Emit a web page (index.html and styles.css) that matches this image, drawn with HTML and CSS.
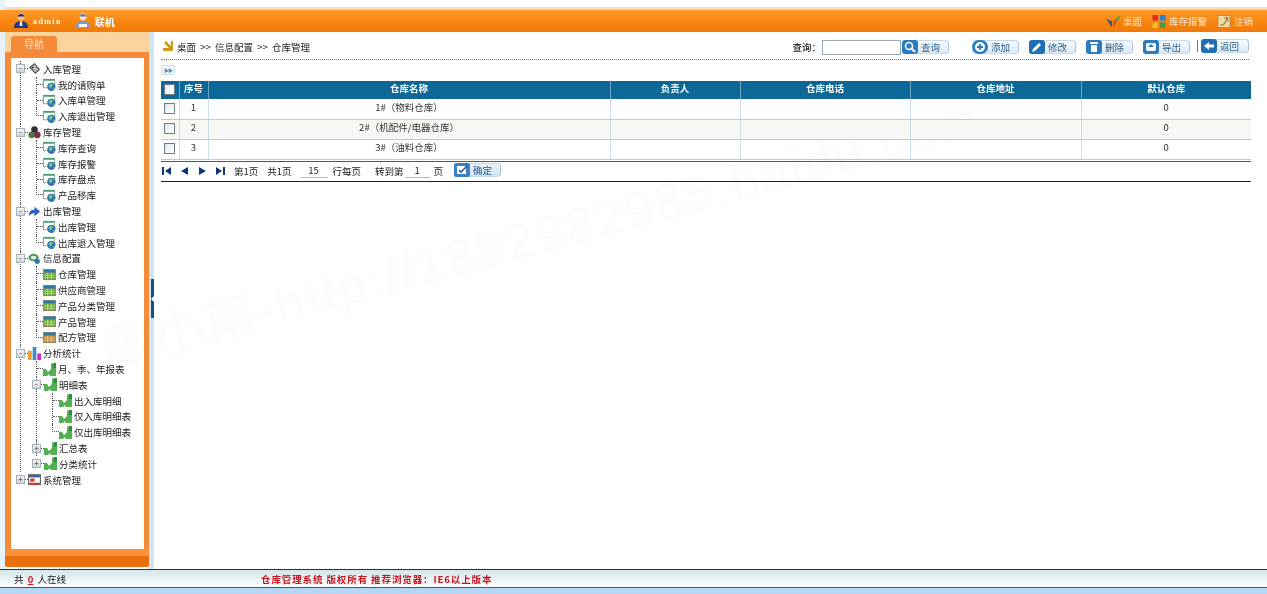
FILE: index.html
```html
<!DOCTYPE html>
<html lang="zh-CN">
<head>
    <meta charset="UTF-8">
    <title>仓库管理系统</title>
    <link rel="stylesheet" href="styles.css">
</head>
<body>
<svg class="defs" width="0" height="0">
    <symbol id="i-page" viewBox="0 0 14 14"><rect x="0.5" y="1.5" width="12" height="9" fill="#fff" stroke="#7fae94"/><rect x="0.5" y="1" width="12" height="2" fill="#4fa070"/><circle cx="9" cy="9.500" r="4.500" fill="#2b78b8"/><path d="M6 8l2.500-2 2 1-1 3-2 1zM10.500 11.500l2.500-1.500-1 2.500z" fill="#8cc46a"/></symbol>
    <symbol id="i-table" viewBox="0 0 14 12"><rect width="14" height="12" fill="#8c8a6a"/><rect x="1" y="1" width="12" height="3" fill="#2a78b0"/><rect x="1" y="4" width="12" height="7" fill="#6fae3c"/><path d="M1 6.5h12M1 9h12M5 4v7M9 4v7" stroke="#d6e6a8" stroke-width=".7"/></symbol>
    <symbol id="i-tablered" viewBox="0 0 14 12"><rect width="14" height="12" fill="#8c8a6a"/><rect x="1" y="1" width="12" height="3" fill="#2a78b0"/><rect x="1" y="4" width="12" height="7" fill="#c98a3c"/><path d="M1 6.5h12M1 9h12M5 4v7M9 4v7" stroke="#e8d8a8" stroke-width=".7"/></symbol>
    <symbol id="i-chart" viewBox="0 0 13 13"><path d="M0 6h3l2 3 3-3V1l2-1h3v13H0z" fill="#52b052"/><path d="M10 0h3v5h-3z" fill="#2f8f3a"/><path d="M4 13l1.500-2 2 2z" fill="#d5f0d5"/></symbol>
    <symbol id="i-tag" viewBox="0 0 14 14"><path d="M1 6l6-5 6 7-5 5z" fill="#55585c"/><path d="M3 6l4-3 4 5-3 3z" fill="#b9bdc0"/><circle cx="5" cy="6" r="1" fill="#222"/></symbol>
    <symbol id="i-balls" viewBox="0 0 14 14"><circle cx="7" cy="4" r="3.6" fill="#2b2f3a"/><circle cx="4" cy="9.5" r="3.6" fill="#4d7a3a"/><circle cx="10" cy="9.5" r="3.6" fill="#7a2f4a"/></symbol>
    <symbol id="i-arrow" viewBox="0 0 14 14"><path d="M1 12C1 7 3 5 7 5V2l6 5-6 5V9c-3 0-4 1-6 3z" fill="#2a62c0"/></symbol>
    <symbol id="i-people" viewBox="0 0 14 14"><ellipse cx="6" cy="6" rx="5.5" ry="4" fill="#4e9a58"/><ellipse cx="6" cy="6" rx="3" ry="2" fill="#dff0e0"/><circle cx="10" cy="10" r="2.8" fill="#2b78b8"/></symbol>
    <symbol id="i-bars" viewBox="0 0 14 14"><rect x="0" y="4" width="4" height="10" fill="#f0a030"/><rect x="5" y="0" width="4" height="14" fill="#3a8ed0"/><rect x="10" y="7" width="4" height="7" fill="#e020c0"/></symbol>
    <symbol id="i-sys" viewBox="0 0 12 12"><rect x=".5" y="1.5" width="11" height="9" fill="#fff" stroke="#666"/><rect x="1" y="2" width="10" height="2" fill="#2a5a9a"/><rect x="2" y="5" width="4" height="3" fill="#d04030"/><rect x="1" y="9" width="10" height="2" fill="#c83a30"/></symbol>
    <symbol id="i-man" viewBox="0 0 14 16"><circle cx="7" cy="4" r="3.4" fill="#f0c090"/><path d="M3.5 3.5C4 0 10 0 10.500 3.500z" fill="#1c2f70"/><path d="M0 15c0-5 3-7 7-7s7 2 7 7z" fill="#1f3a8a"/><path d="M6 8h2l.5 5H5.500z" fill="#ffe0a0"/></symbol>
    <symbol id="i-online" viewBox="0 0 14 16"><circle cx="7" cy="4" r="3.4" fill="#ffe0c0"/><path d="M3.500 3.500C4 0 10 0 10.500 3.500z" fill="#4a7ac8"/><path d="M0 15c0-5 3-7 7-7s7 2 7 7z" fill="#6aa0e8"/><rect x="3" y="11" width="8" height="3" fill="#fff"/></symbol>
    <symbol id="i-desk" viewBox="0 0 14 12"><path d="M0 3l6 3v6z" fill="#2a5aa0"/><path d="M14 1L7 6v6z" fill="#d05020"/><path d="M8 4l6-4-1 4z" fill="#50a040"/></symbol>
    <symbol id="i-alert" viewBox="0 0 14 14"><rect width="6" height="6" fill="#e03020"/><rect x="8" width="6" height="6" fill="#2a80d0"/><rect y="8" width="6" height="6" fill="#f0c020"/><rect x="8" y="8" width="6" height="6" fill="#40a040"/></symbol>
    <symbol id="i-exit" viewBox="0 0 14 14"><rect x=".5" y=".5" width="13" height="13" fill="#f0d8a0" stroke="#a89060"/><path d="M3 11c5 0 6-4 7-8M7 3h4v4" fill="none" stroke="#9a7a30" stroke-width="1.200"/></symbol>
    <symbol id="i-search" viewBox="0 0 16 14"><rect width="16" height="14" rx="3" fill="#2a7cc0"/><circle cx="7" cy="6" r="3.500" fill="none" stroke="#fff" stroke-width="1.600"/><path d="M9.500 8.500l3.500 3.500" stroke="#fff" stroke-width="2"/></symbol>
    <symbol id="i-add" viewBox="0 0 16 14"><rect width="16" height="14" rx="7" fill="#2a7cc0"/><circle cx="8" cy="7" r="5" fill="#fff"/><path d="M8 4v6M5 7h6" stroke="#2a7cc0" stroke-width="1.800"/></symbol>
    <symbol id="i-edit" viewBox="0 0 16 14"><rect width="16" height="14" rx="3" fill="#1f6fb4"/><path d="M3 12l1-3 6-6 2 2-6 6z" fill="#fff"/></symbol>
    <symbol id="i-del" viewBox="0 0 16 14"><rect width="16" height="14" rx="3" fill="#2a7cc0"/><rect x="4" y="2" width="8" height="2" fill="#fff"/><rect x="5" y="5" width="6" height="7" fill="#fff"/></symbol>
    <symbol id="i-export" viewBox="0 0 16 14"><rect width="16" height="14" rx="3" fill="#2a7cc0"/><rect x="3" y="3" width="10" height="8" rx="2" fill="#fff"/><path d="M5 7l3-3 3 3z" fill="#2a7cc0"/></symbol>
    <symbol id="i-back" viewBox="0 0 16 14"><rect width="16" height="14" rx="3" fill="#1f6fb4"/><path d="M3 7l5-4v2.500h5v3H8V11z" fill="#fff"/></symbol>
    <symbol id="i-ok" viewBox="0 0 16 14"><rect width="16" height="14" rx="2" fill="#3a80c4"/><rect x="3" y="3" width="9" height="8" fill="#fff"/><path d="M5 7l2 2 6-6" fill="none" stroke="#1f5fa0" stroke-width="1.600"/></symbol>
</svg>

<div class="page">
    <div class="topline"></div>
    <header class="topbar">
        <div class="topbar-left">
            <span class="user"><svg class="top-ico"><use href="#i-man"/></svg><b class="user-name">admin</b></span>
            <span class="user"><svg class="top-ico"><use href="#i-online"/></svg><b>联机</b></span>
        </div>
        <div class="topbar-right">
            <a><svg class="link-ico"><use href="#i-desk"/></svg>桌面</a>
            <a><svg class="link-ico"><use href="#i-alert"/></svg>库存报警</a>
            <a><svg class="link-ico"><use href="#i-exit"/></svg>注销</a>
        </div>
    </header>

    <div class="main">
        <aside class="sidebar">
            <div class="tabs"><span class="tab">导航</span></div>
            <div class="nav-panel">
                <ul class="tree">
                    <li>
                        <div class="row"><i class="exp">-</i><i class="dash"></i><svg class="ico"><use href="#i-tag"/></svg><span>入库管理</span></div>
                        <ul>
                            <li><div class="row"><i class="elbow"></i><svg class="ico"><use href="#i-page"/></svg><span>我的请购单</span></div></li>
                            <li><div class="row"><i class="elbow"></i><svg class="ico"><use href="#i-page"/></svg><span>入库单管理</span></div></li>
                            <li><div class="row"><i class="elbow"></i><svg class="ico"><use href="#i-page"/></svg><span>入库退出管理</span></div></li>
                        </ul>
                    </li>
                    <li>
                        <div class="row"><i class="exp">-</i><i class="dash"></i><svg class="ico"><use href="#i-balls"/></svg><span>库存管理</span></div>
                        <ul>
                            <li><div class="row"><i class="elbow"></i><svg class="ico"><use href="#i-page"/></svg><span>库存查询</span></div></li>
                            <li><div class="row"><i class="elbow"></i><svg class="ico"><use href="#i-page"/></svg><span>库存报警</span></div></li>
                            <li><div class="row"><i class="elbow"></i><svg class="ico"><use href="#i-page"/></svg><span>库存盘点</span></div></li>
                            <li><div class="row"><i class="elbow"></i><svg class="ico"><use href="#i-page"/></svg><span>产品移库</span></div></li>
                        </ul>
                    </li>
                    <li>
                        <div class="row"><i class="exp">-</i><i class="dash"></i><svg class="ico"><use href="#i-arrow"/></svg><span>出库管理</span></div>
                        <ul>
                            <li><div class="row"><i class="elbow"></i><svg class="ico"><use href="#i-page"/></svg><span>出库管理</span></div></li>
                            <li><div class="row"><i class="elbow"></i><svg class="ico"><use href="#i-page"/></svg><span>出库退入管理</span></div></li>
                        </ul>
                    </li>
                    <li>
                        <div class="row"><i class="exp">-</i><i class="dash"></i><svg class="ico"><use href="#i-people"/></svg><span>信息配置</span></div>
                        <ul>
                            <li><div class="row"><i class="elbow"></i><svg class="ico"><use href="#i-table"/></svg><span>仓库管理</span></div></li>
                            <li><div class="row"><i class="elbow"></i><svg class="ico"><use href="#i-table"/></svg><span>供应商管理</span></div></li>
                            <li><div class="row"><i class="elbow"></i><svg class="ico"><use href="#i-table"/></svg><span>产品分类管理</span></div></li>
                            <li><div class="row"><i class="elbow"></i><svg class="ico"><use href="#i-table"/></svg><span>产品管理</span></div></li>
                            <li><div class="row"><i class="elbow"></i><svg class="ico"><use href="#i-tablered"/></svg><span>配方管理</span></div></li>
                        </ul>
                    </li>
                    <li>
                        <div class="row"><i class="exp">-</i><i class="dash"></i><svg class="ico"><use href="#i-bars"/></svg><span>分析统计</span></div>
                        <ul>
                            <li><div class="row"><i class="elbow"></i><svg class="ico"><use href="#i-chart"/></svg><span>月、季、年报表</span></div></li>
                            <li>
                                <div class="row"><i class="exp">-</i><i class="dash"></i><svg class="ico"><use href="#i-chart"/></svg><span>明细表</span></div>
                                <ul>
                                    <li><div class="row"><i class="elbow"></i><svg class="ico"><use href="#i-chart"/></svg><span>出入库明细</span></div></li>
                                    <li><div class="row"><i class="elbow"></i><svg class="ico"><use href="#i-chart"/></svg><span>仅入库明细表</span></div></li>
                                    <li><div class="row"><i class="elbow"></i><svg class="ico"><use href="#i-chart"/></svg><span>仅出库明细表</span></div></li>
                                </ul>
                            </li>
                            <li><div class="row"><i class="exp">+</i><i class="dash"></i><svg class="ico"><use href="#i-chart"/></svg><span>汇总表</span></div></li>
                            <li><div class="row"><i class="exp">+</i><i class="dash"></i><svg class="ico"><use href="#i-chart"/></svg><span>分类统计</span></div></li>
                        </ul>
                    </li>
                    <li>
                        <div class="row"><i class="exp">+</i><i class="dash"></i><svg class="ico"><use href="#i-sys"/></svg><span>系统管理</span></div>
                    </li>
                </ul>
            </div>
            <div class="side-foot"></div>
        </aside>

        <div class="splitter"><span class="handle"></span></div>

        <section class="content">
            <div class="watermark">零小南-http://1882982985.baidu.com</div>
            <div class="toolbar">
                <svg class="crumb-ico" viewBox="0 0 12 12"><path d="M0 1h10v10H7V5L2 10 0 8l5-5H0z" fill="#c89a20" transform="rotate(90 6 6)"/></svg>
                <span class="crumb">桌面 &nbsp;&gt;&gt;&nbsp; 信息配置 &nbsp;&gt;&gt;&nbsp; 仓库管理</span>
                <div class="search">
                    <label for="q">查询：</label>
                    <input id="q" type="text">
                    <a class="btn"><svg><use href="#i-search"/></svg>查询</a>
                </div>
                <div class="actions">
                    <a class="btn"><svg><use href="#i-add"/></svg>添加</a>
                    <a class="btn"><svg><use href="#i-edit"/></svg>修改</a>
                    <a class="btn"><svg><use href="#i-del"/></svg>删除</a>
                    <a class="btn"><svg><use href="#i-export"/></svg>导出</a>
                    <span class="sep"></span>
                    <a class="btn btn-back"><svg><use href="#i-back"/></svg>返回</a>
                </div>
            </div>

            <div class="expand"><span class="expand-btn">&#9654;&#9654;</span></div>

            <table class="grid">
                <colgroup>
                    <col class="c-check"><col class="c-no"><col class="c-name"><col class="c-man"><col class="c-tel"><col class="c-addr"><col>
                </colgroup>
                <thead>
                    <tr><th><input type="checkbox"></th><th>序号</th><th>仓库名称</th><th>负责人</th><th>仓库电话</th><th>仓库地址</th><th>默认仓库</th></tr>
                </thead>
                <tbody>
                    <tr><td><input type="checkbox"></td><td>1</td><td>1#（物料仓库）</td><td></td><td></td><td></td><td>0</td></tr>
                    <tr class="alt"><td><input type="checkbox"></td><td>2</td><td>2#（机配件/电器仓库）</td><td></td><td></td><td></td><td>0</td></tr>
                    <tr><td><input type="checkbox"></td><td>3</td><td>3#（油料仓库）</td><td></td><td></td><td></td><td>0</td></tr>
                </tbody>
            </table>

            <div class="pager">
                <div class="pager-nav">
                    <svg viewBox="0 0 9 8"><path d="M0 0h2v8H0zM9 0v8L3 4z" fill="#12357a"/></svg>
                    <svg viewBox="0 0 9 8"><path d="M8 0v8L1 4z" fill="#12357a"/></svg>
                    <svg viewBox="0 0 9 8"><path d="M1 0v8l7-4z" fill="#12357a"/></svg>
                    <svg viewBox="0 0 9 8"><path d="M0 0v8l6-4zM7 0h2v8H7z" fill="#12357a"/></svg>
                </div>
                <span class="p-cur">第1页</span>
                <span class="p-all">共1页</span>
                <span class="p-box p-size">15</span>
                <span>行每页</span>
                <span class="p-go">转到第</span>
                <span class="p-box p-num">1</span>
                <span class="p-last">页</span>
                <a class="btn btn-ok"><svg><use href="#i-ok"/></svg>确定</a>
            </div>
        </section>
    </div>

    <footer class="footer">
        <span class="online">共 <u>0</u> 人在线</span>
        <b class="copy">仓库管理系统 版权所有 推荐浏览器：IE6以上版本</b>
    </footer>
    <div class="bottomline"></div>
</div>
</body>
</html>
```

FILE: styles.css
```css
* {
    box-sizing: border-box;
}

html, body {
    margin: 0;
    height: 100%;
    overflow: hidden;
}

body {
    background: #fff;
    color: #222;
    font-family: "Noto Sans CJK SC", "Liberation Sans", sans-serif;
    font-size: 9.5px;
}

.defs {
    position: absolute;
}

.page {
    display: flex;
    flex-direction: column;
    height: 594px;
    filter: blur(0.3px);
    background: #fff;
}

.topline {
    height: 10px;
    margin-left: 5px;
    background: linear-gradient(#fff 7px, #f2dfbe 7px, #f2dfbe 9px, #d9d9d9 9px);
}

.page::before {
    content: "";
    position: absolute;
    left: 0;
    top: 0;
    height: 569px;
    width: 5px;
    background: #e6f4f9;
}

.topbar {
    position: relative;
    display: flex;
    justify-content: space-between;
    align-items: center;
    flex: none;
    height: 22px;
    padding: 0 14px 0 14px;
    background: linear-gradient(#ff9a2c, #f7850f 55%, #f17a0a);
    color: #fff;
}

.topbar-left, .topbar-right, .user, .topbar-right a {
    display: flex;
    align-items: center;
}

.user {
    margin-right: 14px;
}

.user b {
    font-size: 10px;
    margin-left: 5px;
}

.user-name {
    font-family: "Liberation Serif", serif;
    letter-spacing: 1.4px;
    font-size: 8px !important;
}

.top-ico {
    width: 14px;
    height: 16px;
}

.topbar-right {
    color: #ffe6c4;
}

.topbar-right a {
    margin-left: 10px;
}

.link-ico {
    width: 14px;
    height: 13px;
    margin-right: 3px;
}

.main {
    flex: none;
    display: flex;
    height: 537px;
    padding-left: 5px;
}

.sidebar {
    position: relative;
    display: flex;
    flex: none;
    flex-direction: column;
    width: 144px;
    height: 535px;
    background: #f58a3a;
}

.tabs {
    height: 20px;
    padding: 4px 0 0 6px;
    background: #f9d49c;
}

.tab {
    display: block;
    width: 46px;
    height: 16px;
    line-height: 16px;
    text-align: center;
    color: #ffe2c4;
    background: #f58a3a;
    border-radius: 3px 3px 0 0;
    font-size: 10px;
}

.nav-panel {
    flex: 1;
    margin: 6px 5px 0 6px;
    padding: 3px 0 0 9px;
    background: #fff;
}

.side-foot {
    height: 18px;
    border-top: 7px solid #fb9238;
    background: #e8700f;
    border-radius: 0 0 4px 4px;
}

.tree, .tree ul {
    list-style: none;
    margin: 0;
    padding: 0;
}

.tree li {
    border-left: 1px dotted #555;
}

.tree li:last-child {
    border-left-color: transparent;
}

.tree ul {
    margin-left: 15px;
}

.row {
    display: flex;
    align-items: center;
    height: 15.8px;
    white-space: nowrap;
}

.exp {
    flex: none;
    width: 9px;
    height: 9px;
    margin-left: -5px;
    border: 1px solid #a8b2b9;
    background: linear-gradient(#f2f4f5, #cfd6db);
    color: #333;
    font-style: normal;
    font-size: 8px;
    line-height: 6px;
    text-align: center;
}

.dash {
    flex: none;
    width: 3px;
    border-top: 1px dotted #555;
}

.elbow {
    flex: none;
    align-self: flex-start;
    width: 6px;
    height: 8px;
    border-bottom: 1px dotted #555;
}

.tree li:last-child > .row > .elbow {
    width: 7px;
    margin-left: -1px;
    border-left: 1px dotted #555;
}

.ico {
    flex: none;
    width: 13px;
    height: 13px;
    margin-right: 2px;
}

.splitter {
    display: flex;
    flex: none;
    align-items: center;
    width: 5px;
    height: 537px;
    padding: 0 0 4px 2px;
    background: #cfe5f2;
}

.handle {
    display: flex;
    align-items: center;
    width: 3px;
    height: 39px;
    background: #14508c;
}

.handle::before {
    content: "";
    border-right: 3px solid #fff;
    border-top: 3px solid transparent;
    border-bottom: 3px solid transparent;
}

.content {
    position: relative;
    flex: 1;
    min-width: 0;
    padding: 0 18px 0 7px;
}

.watermark {
    position: absolute;
    left: -52px;
    top: 280px;
    font-family: "Liberation Sans", "Noto Sans CJK SC", sans-serif;
    font-size: 50px;
    letter-spacing: 3px;
    color: #fbfbfb;
    white-space: nowrap;
    transform: rotate(-15deg);
    transform-origin: left center;
    mix-blend-mode: multiply;
    pointer-events: none;
}

.toolbar {
    position: relative;
    display: flex;
    align-items: center;
    height: 28px;
    padding: 3px 0 0 1px;
    border-bottom: 1px dotted #777;
}

.crumb-ico {
    width: 12px;
    height: 12px;
    margin-right: 3px;
}

.search {
    display: flex;
    align-items: center;
    margin-left: auto;
}

.search label {
    font-weight: 500;
}

.search input {
    width: 79px;
    height: 15px;
    margin: 0 1px;
    padding: 0;
    border: 1px solid #9ab;
    background: #fff;
}

.actions {
    display: flex;
    align-items: center;
    gap: 10px;
    margin-left: 23px;
}

.btn {
    display: inline-flex;
    align-items: center;
    width: 47px;
    height: 14px;
    padding-right: 2px;
    border: 1px solid #c4d8ea;
    border-left: 0;
    border-right-color: #a9c4dc;
    border-radius: 4px;
    background: linear-gradient(#f4f9fd, #dcebf6);
    color: #2f5f88;
}

.btn svg {
    flex: none;
    width: 16px;
    height: 14px;
    margin: -1px 3px -1px 0;
}

.sep {
    width: 1px;
    height: 12px;
    margin: -2px -7px 0 -3px;
    background: #777;
}

.btn-back {
    width: 48px;
    margin: -3px 0 0 0;
}

.expand {
    position: relative;
    height: 21px;
    padding: 5px 0 0 0;
}

.expand-btn {
    display: block;
    width: 14px;
    height: 10px;
    border: 1px solid #cfdde8;
    border-radius: 2px;
    background: #eef5fa;
    color: #4a90c8;
    font-size: 5px;
    line-height: 8px;
    text-align: center;
    letter-spacing: -1px;
}

.grid {
    position: relative;
    width: 1090px;
    table-layout: fixed;
    border-collapse: collapse;
    text-align: center;
}

.c-check { width: 18px; }
.c-no { width: 29px; }
.c-name { width: 402px; }
.c-man { width: 130px; }
.c-tel { width: 170px; }
.c-addr { width: 171px; }

.grid th {
    height: 18px;
    padding: 0 0 4px;
    background: #0d6797;
    color: #fff;
    font-weight: 700;
    border-right: 1px solid #6fa3c2;
}

.grid td {
    height: 20px;
    padding: 0 0 4px;
    border-right: 1px solid #cfdde4;
    border-bottom: 1px solid #c4c9cc;
    color: #333;
}

.grid tr.alt td {
    background: #f7f7f3;
}

.grid th:last-child, .grid td:last-child {
    border-right: 0;
}

.grid input {
    display: block;
    width: 11px;
    height: 11px;
    margin: 3px auto 0;
    appearance: none;
    border: 1px solid #6e7f88;
    background: linear-gradient(135deg, #e4e8ea, #fff);
}

.pager {
    position: relative;
    display: flex;
    align-items: center;
    width: 1090px;
    height: 21px;
    margin-top: 1px;
    border-top: 1px solid #555;
    border-bottom: 1px solid #222;
}

.pager-nav {
    display: flex;
    gap: 9px;
    margin: 0 9px 0 1px;
}

.pager-nav svg {
    width: 9px;
    height: 8px;
}

.p-all {
    margin: 0 8px 0 9px;
}

.p-box {
    height: 13px;
    line-height: 11px;
    text-align: center;
    border-bottom: 1px solid #bbb;
}

.p-size {
    width: 28px;
    margin-right: 5px;
}

.p-go {
    margin: 0 1px 0 14px;
}

.p-num {
    width: 25px;
    margin-right: 4px;
}

.btn-ok {
    margin-left: 11px;
    margin-bottom: 2px;
    background: linear-gradient(#eaf3fb, #cfe2f3);
}

.footer {
    display: flex;
    align-items: center;
    flex: none;
    height: 19px;
    padding-left: 14px;
    border-top: 1px solid #333;
    border-bottom: 1px solid #555;
    background: linear-gradient(#d4e6ea, #fdfdfd);
}

.online {
    width: 247px;
}

.online u {
    color: #c8141e;
    font-weight: 700;
    margin: 0 2px;
}

.copy {
    color: #c8141e;
    letter-spacing: 0.9px;
}

.bottomline {
    flex: 1;
    background: #b6d6f6;
}
```
